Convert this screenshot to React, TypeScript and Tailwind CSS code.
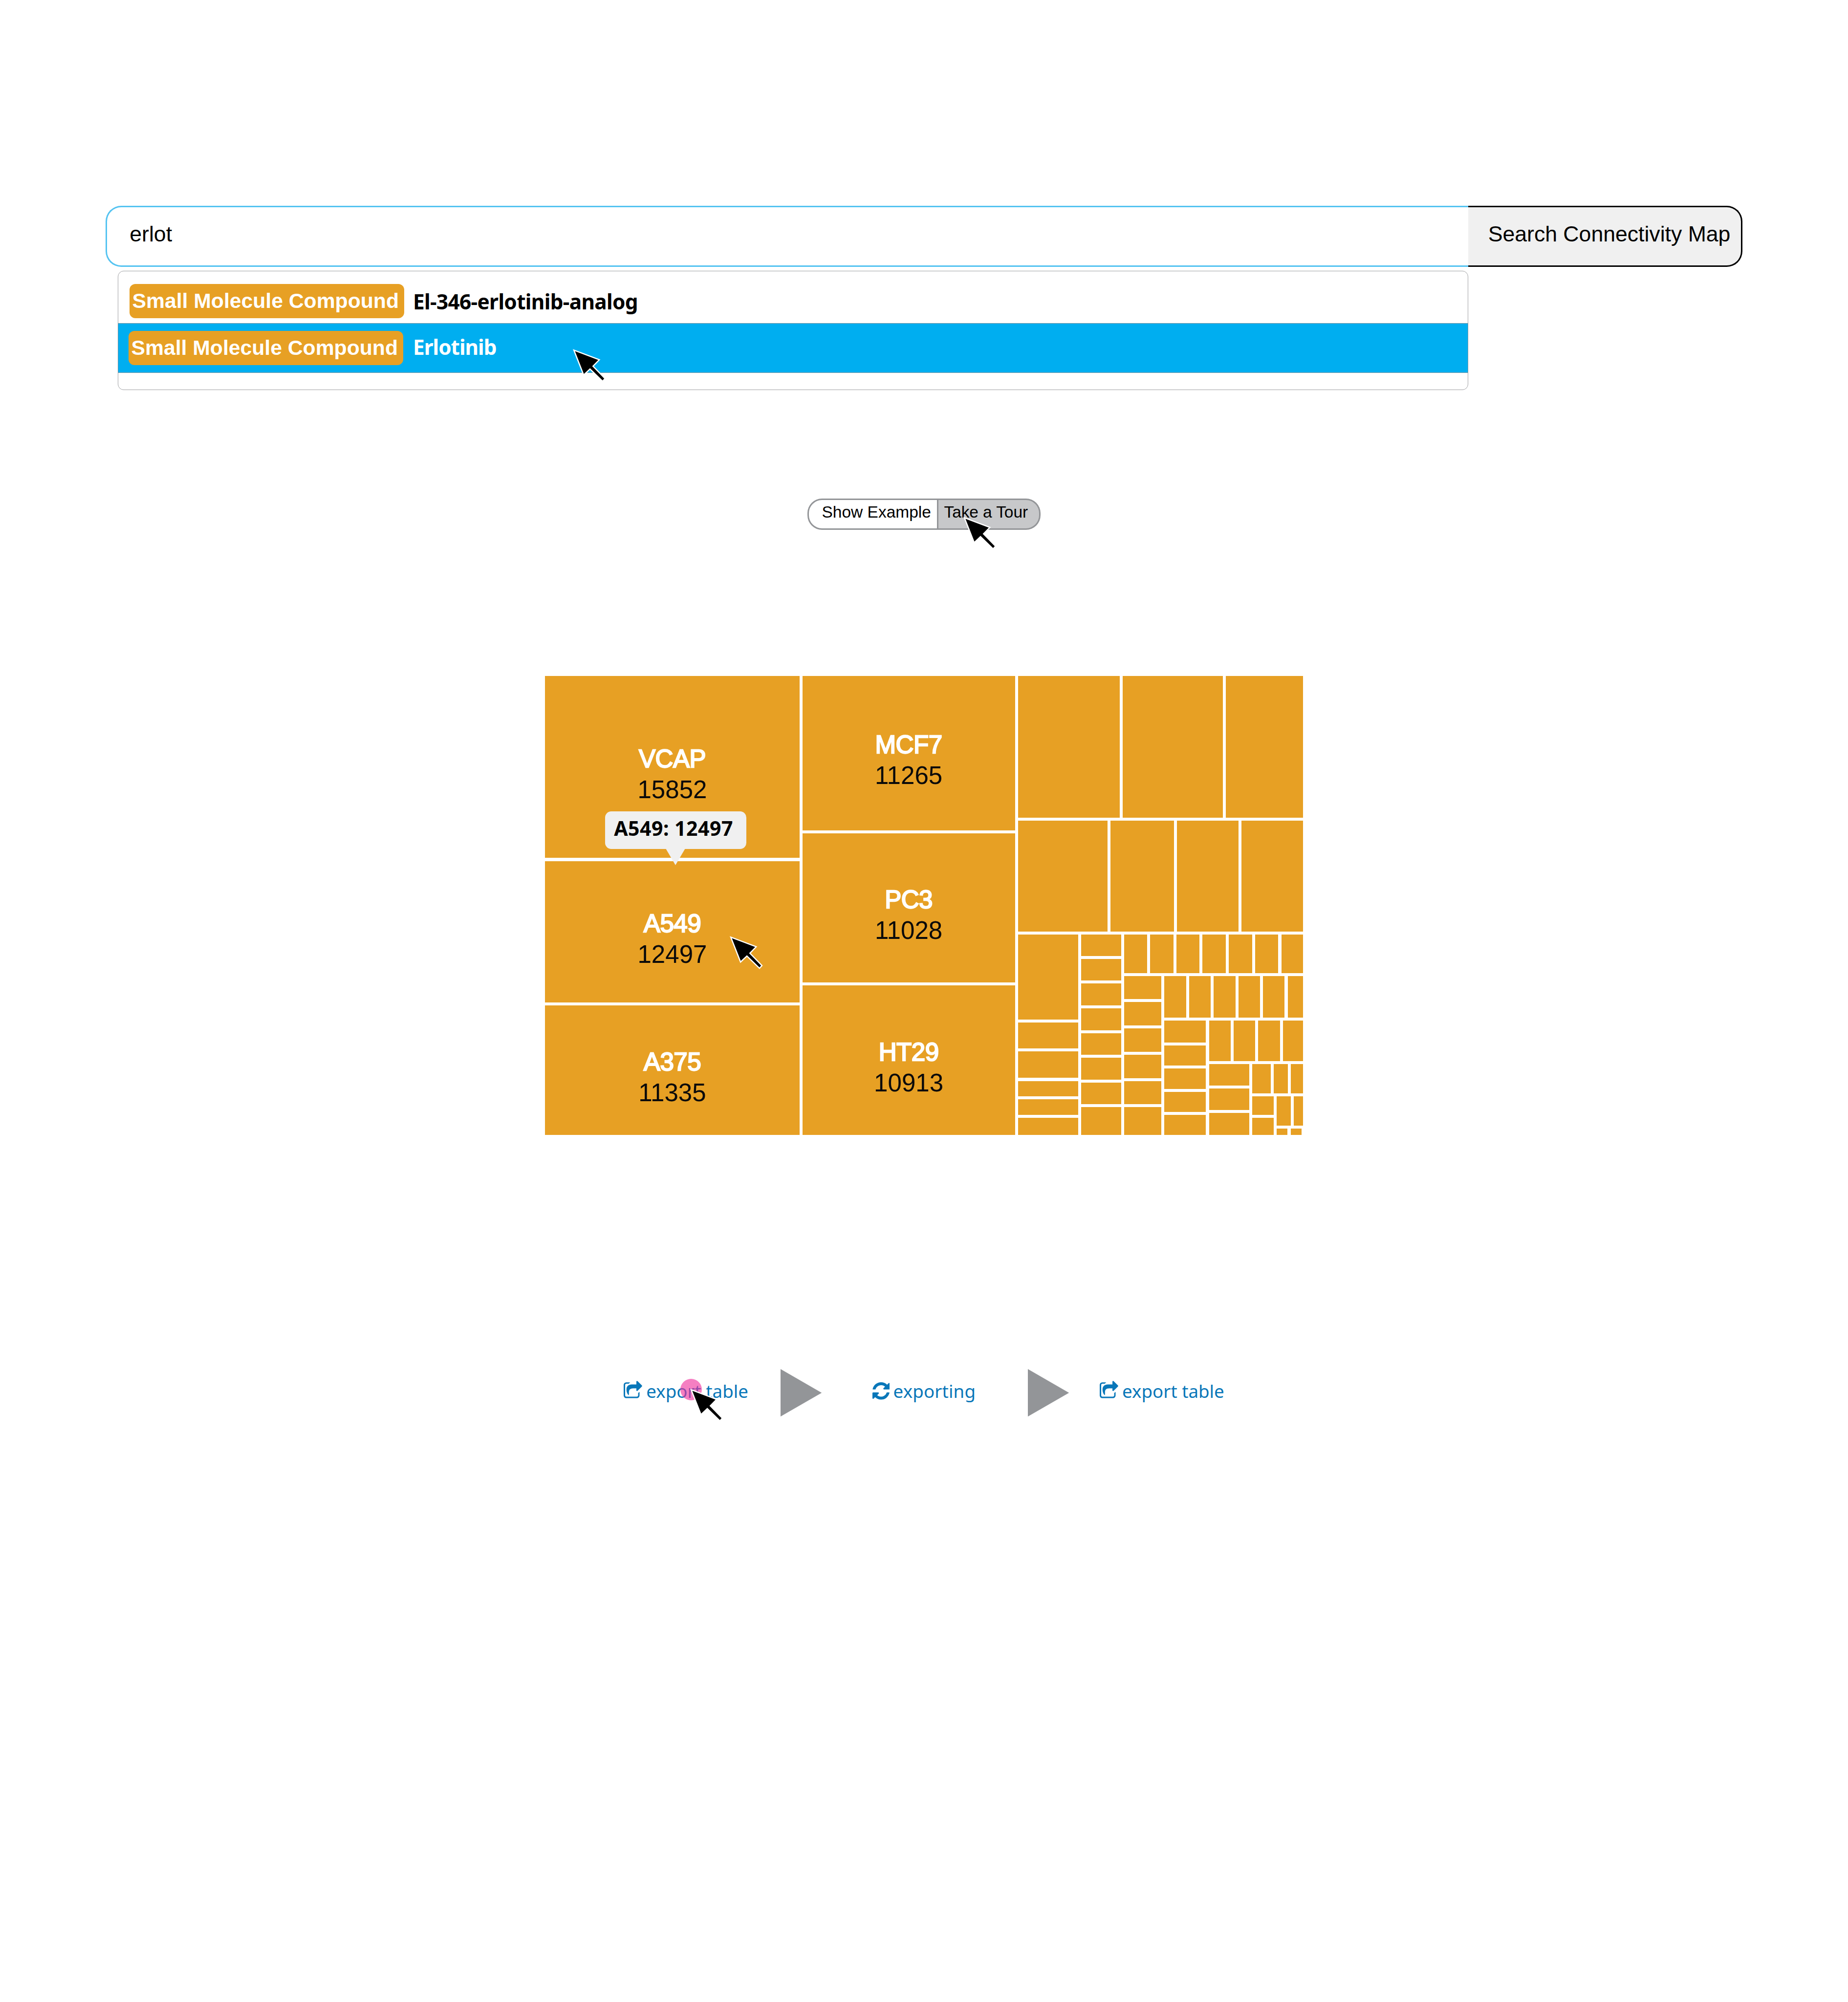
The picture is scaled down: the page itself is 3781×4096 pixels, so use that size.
import React from "react";

type Tile = {
  size: number;
  dir?: "row" | "col";
  children?: Tile[];
  name?: string;
  count?: string;
  empty?: boolean;
};

const tiles = (...sizes: number[]): Tile[] => sizes.map((size) => ({ size }));
const row = (size: number, children: Tile[]): Tile => ({ size, dir: "row", children });
const col = (size: number, children: Tile[]): Tile => ({ size, dir: "col", children });
const cell = (size: number, name: string, count: string): Tile => ({ size, name, count });

const corner = col(262, [
  row(207, tiles(96, 73, 63)),
  row(272, [
    col(111, tiles(131, 120)),
    col(136, [
      row(207, tiles(73, 48)),
      row(44, [{ size: 58 }, { size: 56 }, { size: 0.01, empty: true }]),
    ]),
  ]),
]);

const lines: Tile = row(1550, [
  col(688, [
    cell(492, "VCAP", "15852"),
    cell(383, "A549", "12497"),
    cell(350, "A375", "11335"),
  ]),
  col(575, [
    cell(416.6, "MCF7", "11265"),
    cell(404, "PC3", "11028"),
    cell(404, "HT29", "10913"),
  ]),
  col(771, [
    row(382.6, tiles(526, 518, 398)),
    row(300, tiles(463, 327, 318, 317)),
    row(542, [
      col(312, tiles(598, 183, 186, 109, 110, 120)),
      col(208, tiles(151, 151, 155, 152, 151, 154, 152, 196)),
      col(923, [
        row(272, tiles(118, 119, 119, 120, 120, 120, 111)),
        row(1121, [
          col(191, tiles(162, 165, 164, 165, 162, 196)),
          col(717, [
            row(293, tiles(113, 111, 111, 112, 111, 78)),
            row(807, [
              col(216, tiles(154, 141, 142, 142, 141)),
              col(486, [
                row(285, tiles(111, 111, 113, 103)),
                row(502, [col(207, tiles(152, 151, 154)), corner]),
              ]),
            ]),
          ]),
        ]),
      ]),
    ]),
  ]),
]);

function TreeTile({ tile }: { tile: Tile }) {
  if (tile.children) {
    return (
      <div
        className={
          tile.dir === "row"
            ? "flex min-h-0 min-w-0 basis-0 flex-row gap-[6.1px]"
            : "flex min-h-0 min-w-0 basis-0 flex-col gap-[6.1px]"
        }
        style={{ flexGrow: tile.size }}
      >
        {tile.children.map((child, i) => (
          <TreeTile key={i} tile={child} />
        ))}
      </div>
    );
  }
  if (tile.empty) return <div className="-ml-[3px] basis-0" />;
  return (
    <div
      className="flex min-h-0 min-w-0 basis-0 flex-col items-center justify-center overflow-hidden bg-[#e7a024]"
      style={{ flexGrow: tile.size }}
    >
      {tile.name && (
        <div className="pt-[29px] text-center text-[51.1px] leading-[63px]">
          <div className="tracking-[-.5px] text-white [-webkit-text-stroke:2.4px_white]">{tile.name}</div>
          <div className="text-[#0a0a0a]">{tile.count}</div>
        </div>
      )}
    </div>
  );
}

function Cursor({ className }: { className: string }) {
  return (
    <svg viewBox="0 0 90 92" className={`absolute h-[69.6px] w-[68px] overflow-visible ${className}`}>
      <path
        d="M5.8 6L68.8 29.7L52.4 46.6L85 80L80.5 85L46.5 52L30 67.6Z"
        fill="#000"
        stroke="#fff"
        strokeWidth="6.6"
        strokeMiterlimit="10"
        paintOrder="stroke"
      />
    </svg>
  );
}

function ExportIcon() {
  return (
    <svg viewBox="0 0 50.5 47.5" className="mt-[24.5px] h-[35.9px] w-[38.2px] shrink-0 overflow-visible">
      <path
        d="M17.6 4.2H8C3 4.2 0 7 0 12V39C0 44 3 47 8 47H35C40 47 43 44 43 39V30L39.2 33.2V39C39.2 41.8 38 43 35 43H8C5 43 4 41.8 4 39V12C4 9.2 5 8 8 8H13.6Z"
        fill="#0977b9"
      />
      <path
        d="M34.4 10V3C34.4 .2 36.2 -.7 38 1.4L49.4 12.6Q50.6 14 49.4 15.4L38 26.8C36.2 28.6 34.4 27.8 34.4 25V20.5H26C16.5 20.5 13.9 25 14.3 33C14.3 36 14.2 38 13.7 39.5C9.6 35.6 7.4 30 7.6 23C7.8 14.5 13.4 10 22 10Z"
        fill="#0977b9"
      />
    </svg>
  );
}

function RefreshIcon() {
  return (
    <svg viewBox="128 128 1536 1536" className="mt-[27.6px] size-[35.5px] shrink-0" fill="#0977b9">
      <path d="M1639 1056q0 5-1 7-64 268-268 434.5t-478 166.5q-146 0-282.5-55t-243.5-157l-129 129q-19 19-45 19t-45-19-19-45v-448q0-26 19-45t45-19h448q26 0 45 19t19 45-19 45l-137 137q71 66 161 102t187 36q134 0 250-65t186-179q11-17 53-117 8-23 30-23h192q13 0 22.5 9.5t9.5 22.5zm25-800v448q0 26-19 45t-45 19h-448q-26 0-45-19t-19-45 19-45l138-138q-148-137-349-137-134 0-250 65t-186 179q-11 17-53 117-8 23-30 23h-199q-13 0-22.5-9.5t-9.5-22.5v-7q65-268 270-434.5t480-166.5q146 0 284 55.5t245 156.5l130-129q19-19 45-19t45 19 19 45z" />
    </svg>
  );
}

function Triangle() {
  return (
    <svg viewBox="0 0 84 97" className="h-[97.2px] w-[84.1px] shrink-0">
      <path d="M0 0L84 48.5L0 97Z" fill="#939598" />
    </svg>
  );
}

function Chip() {
  return (
    <span className="flex h-[70px] w-[562px] shrink-0 items-center whitespace-nowrap rounded-[12px] bg-[#e7a024] pb-[2px] pl-[5.5px] text-[42.7px] font-bold leading-none text-white">
      Small Molecule Compound
    </span>
  );
}

export default function App() {
  return (
    <div className="flex h-[4096px] w-[3781px] flex-col overflow-hidden bg-white pt-[421.4px] font-['Liberation_Sans',Arial,sans-serif] text-black">
      {/* Search */}
      <div className="ml-[216.3px] flex h-[124.5px] shrink-0 text-[44.6px] leading-none">
        <div className="flex w-[2787.4px] items-center rounded-l-[32px] border-y-[3px] border-l-[3px] border-[#54c3f1] pb-[8px] pl-[46px]">
          erlot
        </div>
        <div className="flex w-[561.5px] items-center whitespace-nowrap rounded-r-[32px] border-y-[3px] border-r-[3px] border-black bg-[#f0f0f0] pb-[8px] pl-[41px]">
          Search Connectivity Map
        </div>
      </div>

      {/* Suggestions */}
      <div className="relative ml-[241px] mt-[8.6px] flex h-[244px] w-[2763px] shrink-0 flex-col rounded-[12px] border border-[#a0a1a4] font-['Noto_Sans','Open_Sans',sans-serif] text-[42.4px] font-bold">
        <div className="flex h-[105.4px] shrink-0 items-start pl-[23px] pt-[25.5px]">
          <div className="font-['Liberation_Sans',Arial,sans-serif]">
            <Chip />
          </div>
          <span className="ml-[18px] mt-[1px] whitespace-nowrap leading-[70px] tracking-[-.68px]">
            El-346-erlotinib-analog
          </span>
        </div>
        <div className="-mx-px flex h-[102.4px] shrink-0 items-start border border-[#8a959c] bg-[#00aef0] pl-[21px] pt-[15px] text-white">
          <div className="font-['Liberation_Sans',Arial,sans-serif]">
            <Chip />
          </div>
          <span className="ml-[20px] -mt-[2px] whitespace-nowrap leading-[70px] tracking-[-1.05px]">
            Erlotinib
          </span>
        </div>
        <Cursor className="left-[929.8px] top-[159px]" />
      </div>

      {/* Example / tour toggle */}
      <div className="relative ml-[1652px] mt-[221.1px] flex h-[64.6px] w-[477px] shrink-0 whitespace-nowrap text-[33.5px] leading-none">
        <div className="flex w-[268px] items-center rounded-l-[30px] border-[3px] border-[#939598] pb-[8px] pl-[26.5px]">
          Show Example
        </div>
        <div className="flex w-[209px] items-center rounded-r-[30px] border-y-[3px] border-r-[3px] border-[#939598] bg-[#c7c8ca] pb-[8px] pl-[11.5px] tracking-[-.1px]">
          Take a Tour
        </div>
        <Cursor className="left-[318.6px] top-[37.6px]" />
      </div>

      {/* Cell line treemap */}
      <div className="relative ml-[1115.4px] mt-[299px] flex h-[939.1px] w-[1550.2px] shrink-0">
        <TreeTile tile={lines} />
        <div className="absolute left-[122.4px] top-[276.8px] flex h-[76.7px] w-[288.9px] items-center whitespace-nowrap rounded-[12.8px] bg-[#f0f0f0] pb-[7px] pl-[18.4px] font-['Noto_Sans','Open_Sans',sans-serif] text-[41px] font-bold leading-none tracking-[.5px]">
          A549: 12497
          <svg viewBox="0 0 40 34" className="absolute left-[124.6px] top-[76px] h-[34px] w-[40px]">
            <path d="M0 0H40L20 34Z" fill="#f0f0f0" />
          </svg>
        </div>
        <Cursor className="left-[377.2px] top-[531.5px]" />
      </div>

      {/* Export states */}
      <div className="relative ml-[1275.9px] mt-[478.4px] flex h-[97.2px] shrink-0 items-start whitespace-nowrap font-['Noto_Sans','Open_Sans',sans-serif] text-[36.7px] leading-[50px] text-[#0977b9]">
        <div className="flex w-[321.4px] shrink-0">
          <ExportIcon />
          <span className="ml-[8.2px] mt-[20.5px]">export table</span>
        </div>
        <Triangle />
        <div className="ml-[103.2px] flex w-[318.7px] shrink-0">
          <RefreshIcon />
          <span className="ml-[7.5px] mt-[20.5px] tracking-[.15px]">exporting</span>
        </div>
        <Triangle />
        <div className="ml-[62.9px] flex shrink-0">
          <ExportIcon />
          <span className="ml-[7.7px] mt-[20.5px]">export table</span>
        </div>
        <div className="absolute left-[115.8px] top-[20.3px] size-[44px] rounded-full bg-[#ef2d9b]/61" />
        <Cursor className="left-[136.4px] top-[40.6px]" />
      </div>
    </div>
  );
}
